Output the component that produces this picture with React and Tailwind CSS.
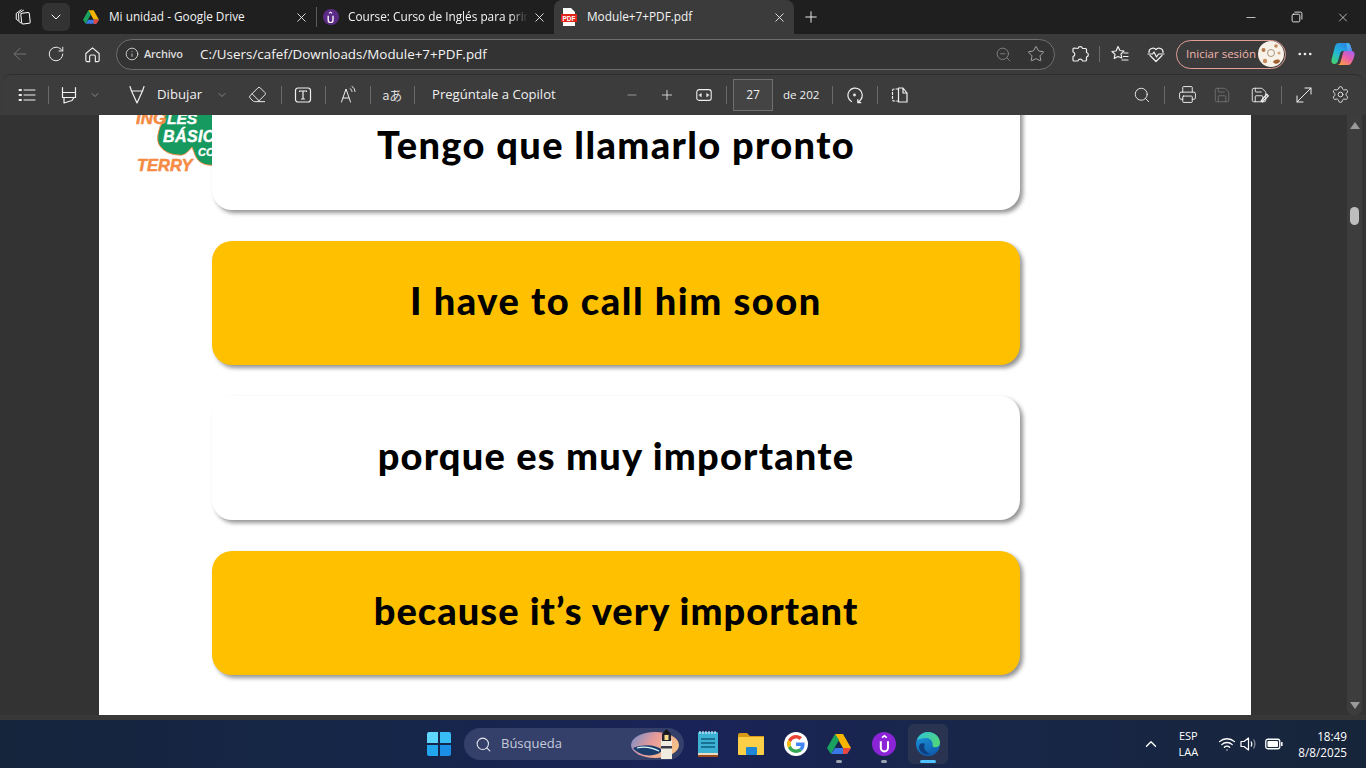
import React from "react";
import {
  ChevronDown, X, Plus, Minus, ArrowLeft, RotateCw, Info, ZoomOut, Star, Ellipsis,
  Eraser, Search, Printer, Save, Settings, ChevronUp, Wifi,
} from "lucide-react";

const S = ({ d, size = 20, sw = 1.2, children, className = "" }) => (
  <svg width={size} height={size} viewBox="0 0 20 20" fill="none" stroke="currentColor" strokeWidth={sw} strokeLinecap="round" strokeLinejoin="round" className={className}>
    {d ? <path d={d} /> : children}
  </svg>
);

const Cell = ({ w, ml = 0, children, className = "" }) => (
  <div style={{ width: w, marginLeft: ml }} className={"flex shrink-0 items-center justify-center " + className}>{children}</div>
);
const Sep = ({ ml, h = "h-[18px]" }) => <div style={{ marginLeft: ml }} className={"w-px shrink-0 bg-[#6a6a6a] " + h} />;

function DriveIcon({ size = 16 }) {
  return (
    <svg width={size} height={size} viewBox="0 0 24 22">
      <path d="M8 1h8l8 14h-8z" fill="#f7b500" />
      <path d="M8 1 0 15l4 6 8-14z" fill="#1aa35f" />
      <path d="M4 21h16l4-6H8z" fill="#3b78e7" />
      <path d="M16 15 24 15l-4 6h-4z" fill="#e8453c" />
    </svg>
  );
}
function UIcon({ size = 16, bg = "#5b2a86" }) {
  return (
    <div style={{ width: size, height: size, background: bg }} className="flex items-center justify-center rounded-full">
      <svg width={size * 0.7} height={size * 0.8} viewBox="0 0 12 16" fill="none" stroke="#fff" strokeWidth="1.7">
        <path d="M3 6v5.500a3 3 0 0 0 6 0V6" />
        <path d="M4 3 6 1.500 8 3" strokeWidth="1.300" />
      </svg>
    </div>
  );
}
function PdfIcon() {
  return (
    <svg width="16" height="18" viewBox="0 0 16 18">
      <path d="M2 0h8l4 4v14H2z" fill="#fff" />
      <rect x="0" y="6" width="16" height="8" fill="#e2231a" />
      <text x="8" y="12.600" textAnchor="middle" fontSize="6.400" fontWeight="700" fill="#fff" fontFamily="Liberation Sans, sans-serif">PDF</text>
    </svg>
  );
}

function Tab({ icon, label, w, active, textW, gap, sep, fade }) {
  return (
    <div style={{ width: w }} className={"relative flex h-[34px] shrink-0 items-center pl-[7px] " + (active ? "rounded-t-lg bg-[#3b3b3b]" : "")}>
      <div className="flex w-[16px] justify-center">{icon}</div>
      <div
        className={"overflow-hidden whitespace-nowrap text-[11.8px] text-[#f4f4f4] " + (fade ? "[mask-image:linear-gradient(90deg,#000_90%,transparent)]" : "")}
        style={{ width: textW, marginLeft: gap }}
      >
        {label}
      </div>
      <X size={15} strokeWidth={1.4} className="absolute right-[7px] text-[#f4f4f4]" />
      {sep && <div className="absolute right-[-1px] h-[20px] w-px bg-[#5c5c5c]" />}
    </div>
  );
}

function TabBar() {
  return (
    <div className="flex h-[34px] shrink-0 items-center bg-[#1f1f1f] text-white">
      <Cell w={14} />
      <Cell w={18}>
        <S size={18} sw={1.1}>
          <rect x="8" y="5.500" width="9.500" height="12" rx="1.500" transform="rotate(-6 12 11)" />
          <path d="M7.500 16.500 5.500 15 5 6l5.500-3.500M4.500 14 2.500 12.500V6L8 2" />
        </S>
      </Cell>
      <div className="ml-[10px] flex h-[28px] w-[28px] items-center justify-center rounded-md bg-[#333333]">
        <ChevronDown size={16} strokeWidth={1.5} />
      </div>
      <div className="ml-[6px] flex items-center">
        <Tab w={240} textW={175} gap={10} icon={<DriveIcon />} label="Mi unidad - Google Drive" sep />
        <Tab w={238} textW={180} gap={9} fade icon={<UIcon />} label="Course: Curso de Inglés para principiantes" />
        <Tab w={240} textW={170} gap={10} active icon={<PdfIcon />} label="Module+7+PDF.pdf" />
      </div>
      <Cell w={18} ml={8}><Plus size={20} strokeWidth={1.2} /></Cell>
      <div className="flex-1" />
      <Cell w={14} className="mr-[32px]"><Minus size={15} strokeWidth={1.2} /></Cell>
      <Cell w={14} className="mr-[32px]">
        <S size={14}><rect x="3" y="6" width="11" height="11" rx="2" /><path d="M7 3h8a2 2 0 0 1 2 2v8" /></S>
      </Cell>
      <Cell w={14} className="mr-[16px]"><X size={17} strokeWidth={1.1} /></Cell>
    </div>
  );
}

function Avatar() {
  return (
    <svg width="26" height="26" viewBox="0 0 26 26">
      <circle cx="13" cy="13" r="13" fill="#f7f1e8" />
      <circle cx="5.500" cy="9" r="2" fill="#b47a4c" />
      <path d="M15 21c2-3 6-3 7-1-1 3-5 4-7 1z" fill="#a0602f" />
      <circle cx="7" cy="20" r="2.200" fill="#c98b5d" />
      <circle cx="18" cy="5" r="1.800" fill="#c08a5c" />
      <circle cx="21" cy="12" r="1.500" fill="#d2a47c" />
      <circle cx="13" cy="12" r="3.500" fill="none" stroke="#a08a74" strokeWidth="0.900" />
    </svg>
  );
}
function CopilotIcon() {
  return (
    <svg width="24" height="24" viewBox="0 0 24 24">
      <defs>
        <linearGradient id="cpa" x1="0.800" y1="0" x2="0.100" y2="1"><stop offset="0" stopColor="#2b7fe8" /><stop offset="0.550" stopColor="#22b6d8" /><stop offset="1" stopColor="#45d46a" /></linearGradient>
        <linearGradient id="cpb" x1="0.900" y1="0" x2="0.200" y2="1"><stop offset="0" stopColor="#a65ff0" /><stop offset="0.500" stopColor="#ec5fa8" /><stop offset="1" stopColor="#f9a23c" /></linearGradient>
        <linearGradient id="cpc" x1="0" y1="0" x2="1" y2="1"><stop offset="0" stopColor="#3fc8e8" /><stop offset="1" stopColor="#5f7cf0" /></linearGradient>
      </defs>
      <path d="M8 1h8c2 0 3 1 3.600 3L21 9H12c-1.500 0-2.300.8-2.700 2L7 19c-.5 2-2 3-3.500 3C1 22 0 20 .5 17.500L4 4.500C4.600 2 6 1 8 1z" fill="url(#cpa)" />
      <path d="M14 9h6c2.500 0 4 1.500 3.500 4-.7 3.500-2 6.500-3.500 8.500-1 1-2 1.500-4 1.500H6c2 0 3-1 3.500-3L12 11c.3-1.300 1-2 2-2z" fill="url(#cpb)" />
      <path d="M15.500 1h.5c2 0 3 1 3.600 3L21.500 10c-.7-.7-1.500-1-2.500-1h-2.500z" fill="url(#cpc)" />
    </svg>
  );
}

function AddressBar() {
  return (
    <div className="flex h-[40px] shrink-0 items-center bg-[#3b3b3b] text-[#f0f0f0]">
      <Cell w={24} ml={8} className="text-[#777777]"><ArrowLeft size={20} strokeWidth={1.1} /></Cell>
      <Cell w={24} ml={12}><RotateCw size={18} strokeWidth={1.3} /></Cell>
      <Cell w={24} ml={12}>
        <S size={19}><path d="M3 9 10 3l7 6v7a1.500 1.500 0 0 1-1.500 1.500H13V12a1.500 1.500 0 0 0-1.500-1.500h-3A1.500 1.500 0 0 0 7 12v5.500H4.500A1.500 1.500 0 0 1 3 16z" /></S>
      </Cell>
      <div className="ml-[12px] flex h-[31px] w-[939px] shrink-0 items-center rounded-full border border-[#6e6e6e] bg-[#333333]">
        <Cell w={16} ml={7}><Info size={14} strokeWidth={1.3} /></Cell>
        <span className="ml-[4px] w-[41px] whitespace-nowrap text-[11px] font-semibold tracking-[-0.2px] text-[#dddddd]">Archivo</span>
        <span className="ml-[15px] whitespace-nowrap text-[13.4px] text-[#f3f3f3]">C:/Users/cafef/Downloads/Module+7+PDF.pdf</span>
        <div className="flex-1" />
        <Cell w={18} ml={0} className="-translate-x-px text-[#8a8a8a]"><ZoomOut size={17} strokeWidth={1.2} /></Cell>
        <Cell w={18} ml={14} className="mr-[9px] text-[#bdbdbd]"><Star size={18} strokeWidth={1.1} /></Cell>
      </div>
      <Cell w={20} ml={15}>
        <S size={20}>
          <path d="M8 4.500a2.300 2.300 0 0 1 4.500 0h3a1 1 0 0 1 1 1v3a2.300 2.300 0 0 1 0 4.500v3a1 1 0 0 1-1 1h-3a2.300 2.300 0 0 0-4.500 0h-4a1 1 0 0 1-1-1v-3.500a2.300 2.300 0 0 0 0-4.500v-3a1 1 0 0 1 1-1z" />
        </S>
      </Cell>
      <Sep ml={9} h="h-[16px]" />
      <Cell w={20} ml={10}>
        <S size={20}><path d="m8 2.500 1.900 4 4.100.5-3 2.900.8 4.100L8 12.500 4.200 14.500 5 10.400 2 7.500l4.100-.5zM14 9h4M13.500 12.500H18M12 16h6" /></S>
      </Cell>
      <Cell w={20} ml={16}>
        <S size={20}><path d="M10 17.500 4 11.500M16 11.500 10 17.500M3 8.500A4 4 0 0 1 10 5.500 4 4 0 0 1 17 8.500M2 10h4.500L8 8l2.500 5 2-3H18" /></S>
      </Cell>
      <div className="ml-[10px] flex h-[29px] w-[110px] shrink-0 items-center justify-between rounded-full border border-[#e0a096] pl-[9px] pr-[1px]">
        <span className="whitespace-nowrap text-[11.5px] text-[#f2b5ac]">Iniciar sesión</span>
        <Avatar />
      </div>
      <Cell w={18} ml={10}><Ellipsis size={18} strokeWidth={1.6} /></Cell>
      <Cell w={24} ml={17}><CopilotIcon /></Cell>
    </div>
  );
}

function PdfToolbar() {
  return (
    <div className="flex h-[41px] shrink-0 bg-[#3b3b3b]">
      <div className="mx-[3px] flex h-[40px] flex-1 items-center rounded-t-lg border-t border-[#2e2e2e] bg-[#3c3c3c] text-[#f0f0f0]">
        <Cell w={22} ml={13}>
          <S size={20} sw={1}><path d="M7 5h11M7 10h11M7 15h11" /><path d="M2.500 5h1.500M2.500 10h1.500M2.500 15h1.500" strokeWidth="2" /></S>
        </Cell>
        <Sep ml={10} />
        <Cell w={24} ml={8}>
          <S size={20}><path d="M3.500 2.500v5h13v-5M3.500 7.500v5h13v-5M5 12.500v5.500l8-2.500 2-3" /></S>
        </Cell>
        <Cell w={28}><ChevronDown size={12} strokeWidth={1.2} className="text-[#b5b5b5]" /></Cell>
        <Cell w={24} ml={16}>
          <S size={20}><path d="m3 1.500 1.500 4.500h11L17 1.500M4.500 6 10 18l5.500-12" /></S>
        </Cell>
        <div className="ml-[8px] w-[45px] whitespace-nowrap text-[13.2px]">Dibujar</div>
        <Cell w={16} ml={12}><ChevronDown size={12} strokeWidth={1.2} className="text-[#b5b5b5]" /></Cell>
        <Cell w={24} ml={15}><Eraser size={19} strokeWidth={1.2} /></Cell>
        <Sep ml={12} />
        <Cell w={24} ml={9}>
          <S size={20}><rect x="2.500" y="3" width="15" height="14" rx="2.500" /><path d="M6.500 6.500v-.5h7v.5M10 6v8M8.500 14h3" /></S>
        </Cell>
        <Sep ml={10} />
        <Cell w={24} ml={10}>
          <S size={20} sw={1}><path d="m3.500 17 4.500-13 4.500 13M5 13h6M12 3.500c1.200.7 1.800 1.700 2 3M14 1.500c1.800 1 2.800 2.700 3 5" /></S>
        </Cell>
        <Sep ml={10} />
        <Cell w={24} ml={9}>
          <span className="whitespace-nowrap text-[13px] tracking-[-0.5px] text-[#dcdcdc]" style={{ fontFamily: '"Noto Sans CJK JP", sans-serif' }}>aあ</span>
        </Cell>
        <Sep ml={10} />
        <div className="ml-[17px] w-[127px] whitespace-nowrap text-[13.1px]">Pregúntale a Copilot</div>
        <Cell w={24} ml={61} className="text-[#a8a8a8]"><Minus size={14} strokeWidth={1.4} /></Cell>
        <Cell w={24} ml={11}><Plus size={16} strokeWidth={1.2} /></Cell>
        <Cell w={24} ml={13}>
          <S size={18}>
            <rect x="2" y="4" width="16" height="12" rx="2.500" />
            <path d="m4.500 10 2.500-1.800v3.600zM15.500 10 13 8.200v3.600z" fill="currentColor" strokeWidth="0.600" />
          </S>
        </Cell>
        <Sep ml={10} />
        <div className="ml-[6px] flex h-[32px] w-[40px] shrink-0 items-center justify-center border border-[#6f6f6f] bg-[#444444] text-[12px]">27</div>
        <div className="ml-[10px] w-[37px] whitespace-nowrap text-[11.6px]">de 202</div>
        <Sep ml={12} />
        <Cell w={24} ml={10}>
          <S size={20}><path d="M6.500 16.500A7.200 7.200 0 1 1 15.500 15l-2.500 2.500M12.800 14.500v3.200h3" /><circle cx="9.500" cy="10" r="0.800" /></S>
        </Cell>
        <Sep ml={10} />
        <Cell w={24} ml={10}>
          <S size={20}><path d="M8 4H4a1.500 1.500 0 0 0-1.500 1.500v9A1.500 1.500 0 0 0 4 16h4" strokeDasharray="2 2" /><path d="M8.500 3v14h8.500V8l-4-5zM13 3v5h4" /></S>
        </Cell>
        <div className="flex-1" />
        <Cell w={24}><Search size={18} strokeWidth={1.2} /></Cell>
        <Sep ml={10} />
        <Cell w={24} ml={10}><Printer size={19} strokeWidth={1.2} /></Cell>
        <Cell w={24} ml={11} className="text-[#767676]"><Save size={18} strokeWidth={1.1} /></Cell>
        <Cell w={24} ml={13} className="relative">
          <Save size={18} strokeWidth={1.2} />
          <S size={11} sw={2.4} className="absolute bottom-[1px] right-[1px]"><path d="M4 16 14 4l3 3-11 11z" /></S>
        </Cell>
        <Sep ml={10} />
        <Cell w={24} ml={10}>
          <S size={20} sw={1}><path d="M3 17 17 3M11 3h6v6M3 11v6h6" /></S>
        </Cell>
        <Cell w={24} ml={12} className="mr-[11px]"><Settings size={19} strokeWidth={1.1} /></Cell>
      </div>
    </div>
  );
}

function Logo() {
  const f = { fontFamily: '"Liberation Sans", sans-serif', fontWeight: 700, fontStyle: "italic" };
  return (
    <svg width="76" height="58" viewBox="0 0 76 58" className="absolute left-[37px] top-0">
      <path d="M30 -2 L78 -2 L78 50 C70 51 63 48 60 42 C58 38 57 34 56 32 C52 37 48 41 43 40 C36 40 28 37 24 31 C20 26 22 18 24 12 C26 8 28 4 30 -2Z" fill="#169a60" stroke="#f58a42" strokeWidth="1" />
      <text x="0" y="9" fontSize="17" fill="#f58a42" stroke="#f58a42" strokeWidth="0.500" style={f}>ING</text>
      <text x="31" y="9" fontSize="15.500" fill="#fff" stroke="#fff" strokeWidth="0.400" style={f}>LES</text>
      <text x="27" y="27" fontSize="16" fill="#fff" stroke="#fff" strokeWidth="0.400" style={f} letterSpacing="0.400">BÁSICO</text>
      <text x="62" y="41" fontSize="11" fill="#fff" stroke="#fff" strokeWidth="0.300" style={f}>CO</text>
      <text x="1" y="56" fontSize="16.500" fill="#f58a42" stroke="#f58a42" strokeWidth="0.500" style={f}>TERRY</text>
    </svg>
  );
}

function Card({ text, yellow, first, tracking }) {
  return (
    <div
      className={
        "flex h-[124px] w-[808px] shrink-0 items-center justify-center rounded-[20px] shadow-[3px_3px_4px_rgba(0,0,0,0.42)] " +
        (yellow ? "bg-[#ffc000]" : "bg-white")
      }
    >
      <span
        className={"whitespace-nowrap text-[38px] font-black text-black " + tracking}
        style={{ fontFamily: 'Lato, "Liberation Sans", sans-serif', position: "relative", top: first ? -4 : -3 }}
      >
        {text}
      </span>
    </div>
  );
}

function Content() {
  return (
    <div className="relative flex h-[600px] shrink-0 overflow-hidden bg-[#333333]">
      <div className="relative ml-[99px] h-[600px] w-[1152px] shrink-0 overflow-hidden bg-white pl-[113px]">
        <Logo />
        <div className="relative -mt-[29px] flex flex-col gap-[31px]">
          <Card first tracking="tracking-[1.37px]" text="Tengo que llamarlo pronto" />
          <Card yellow tracking="tracking-[1.55px]" text="I have to call him soon" />
          <Card tracking="tracking-[1.2px]" text="porque es muy importante" />
          <Card yellow tracking="tracking-[1.05px]" text="because it’s very important" />
        </div>
      </div>
      <div className="ml-[96px] flex w-[15px] shrink-0 flex-col items-center rounded-b-md bg-[#3d3d3d] pt-[7px]">
        <div className="h-0 w-0 border-x-[5px] border-b-[7px] border-x-transparent border-b-[#9a9a9a]" />
        <div className="mt-[78px] h-[18px] w-[9px] rounded-full bg-[#bdbdbd]" />
        <div className="flex-1" />
        <div className="mb-[6px] h-0 w-0 border-x-[5px] border-t-[7px] border-x-transparent border-t-[#9a9a9a]" />
      </div>
    </div>
  );
}

function WinLogo() {
  return (
    <div className="grid h-[24px] w-[24px] grid-cols-2 gap-[1.500px]">
      <div className="rounded-tl-[2px] bg-[#5fd6fb]" />
      <div className="rounded-tr-[2px] bg-[#39bdf5]" />
      <div className="rounded-bl-[2px] bg-[#22a7ee]" />
      <div className="rounded-br-[2px] bg-[#1b8fe6]" />
    </div>
  );
}
function Lighthouse() {
  return (
    <svg width="50" height="32" viewBox="0 0 50 32">
      <defs>
        <linearGradient id="lhs" x1="0" y1="0" x2="1" y2="0.400"><stop offset="0" stopColor="#6b8fd0" /><stop offset="0.500" stopColor="#e79a9a" /><stop offset="1" stopColor="#f6c08a" /></linearGradient>
      </defs>
      <ellipse cx="24" cy="17" rx="24" ry="13" fill="url(#lhs)" />
      <path d="M2 20c10-4 22-4 30 2-6 7-22 8-30-2z" fill="#1b3d6c" />
      <path d="M6 20c8-2 14-1 22 3" stroke="#dff" strokeWidth="1.200" fill="none" />
      <rect x="30" y="12" width="11" height="19" fill="#f1ece0" />
      <rect x="30" y="18" width="11" height="2.500" fill="#3a3a4a" />
      <rect x="31" y="6" width="9" height="7" fill="#22252f" />
      <rect x="33.500" y="7" width="4" height="5" fill="#f6d98a" />
      <path d="m31 6 4.500-5L40 6z" fill="#15171f" />
    </svg>
  );
}
function Notepad() {
  return (
    <svg width="20" height="26" viewBox="0 0 20 26">
      <rect x="0" y="1" width="20" height="25" rx="1" fill="#3db1d4" />
      <rect x="0" y="22" width="20" height="2" fill="#e9dcc0" />
      <rect x="0" y="24" width="20" height="2" fill="#9a4a1c" />
      <path d="M3 8h14M3 12h14M3 16h14" stroke="#0d5f7e" strokeWidth="1.300" />
      <path d="M2 0v3M5 0v3M8 0v3M11 0v3M14 0v3M17 0v3" stroke="#cfe9f3" strokeWidth="1.200" />
    </svg>
  );
}
function Folder() {
  return (
    <svg width="26" height="22" viewBox="0 0 26 22">
      <path d="M0 2a2 2 0 0 1 2-2h7l3 3h14v4H0z" fill="#d99a14" />
      <rect x="0" y="4" width="26" height="18" rx="1" fill="#fbcf48" />
      <rect x="8" y="14" width="11" height="8" rx="1" fill="#1d87d6" />
    </svg>
  );
}
function GoogleIcon() {
  return (
    <div className="flex h-[24px] w-[24px] items-center justify-center rounded-full bg-white">
      <svg width="18" height="18" viewBox="0 0 48 48">
        <path fill="#ea4335" d="M24 9.500c3.500 0 6.700 1.300 9.100 3.500l6.800-6.800C35.800 2.400 30.200 0 24 0 14.600 0 6.500 5.400 2.600 13.200l7.900 6.200C12.400 13.700 17.700 9.500 24 9.500z" />
        <path fill="#4285f4" d="M46.900 24.500c0-1.600-.1-3.100-.4-4.500H24v9h12.900c-.6 3-2.300 5.500-4.800 7.200l7.700 6c4.500-4.200 7.100-10.300 7.100-17.700z" />
        <path fill="#fbbc05" d="M10.500 28.600a14.500 14.500 0 0 1 0-9.200l-7.900-6.200a24 24 0 0 0 0 21.600z" />
        <path fill="#34a853" d="M24 48c6.500 0 11.900-2.100 15.900-5.800l-7.700-6c-2.200 1.500-4.900 2.300-8.200 2.300-6.300 0-11.600-4.200-13.500-9.900l-7.900 6.200C6.500 42.600 14.600 48 24 48z" />
      </svg>
    </div>
  );
}
function EdgeIcon() {
  return (
    <svg width="24" height="24" viewBox="0 0 24 24">
      <defs>
        <linearGradient id="edg" x1="0" y1="0" x2="1" y2="0.600"><stop offset="0" stopColor="#2fc4d8" /><stop offset="1" stopColor="#4fd67c" /></linearGradient>
        <linearGradient id="edb" x1="0" y1="0" x2="0.400" y2="1"><stop offset="0" stopColor="#1e9ee0" /><stop offset="1" stopColor="#0f5fb0" /></linearGradient>
      </defs>
      <circle cx="12" cy="12" r="12" fill="url(#edb)" />
      <path d="M1 8C3 3 7 0 12 0c7 0 12 5 12 11 0 3-3 5-6 4-2-.5-1-2-1.500-4C16 8 13 6 10 6 6 6 3 7 1 8z" fill="url(#edg)" />
      <path d="M9 12c-2 3 0 8 5 10-5 2-11-2-11-7 0-3 3-5 6-3z" fill="#0d3f7e" />
    </svg>
  );
}
const Dot = () => <div className="absolute bottom-[-7px] h-[3px] w-[6px] rounded-full bg-[#9aa3b0]" />;

function Taskbar() {
  const ico = "relative flex w-[28px] shrink-0 items-center justify-center";
  return (
    <div className="flex h-[48px] shrink-0 items-center bg-[linear-gradient(90deg,#15253c_0%,#16264a_30%,#1a2358_50%,#18264a_70%,#17253a_100%)]">
      <div className="ml-[427px]"><WinLogo /></div>
      <div className="ml-[13px] flex h-[32px] w-[220px] shrink-0 items-center rounded-full bg-[#35406a] pl-[11px] pr-[3px]">
        <Search size={17} strokeWidth={1.5} className="text-[#e3e6ee]" />
        <span className="ml-[9px] text-[13px] text-[#c6cbdc]">Búsqueda</span>
        <div className="flex-1" />
        <Lighthouse />
      </div>
      <div className={ico + " ml-[10px]"}><Notepad /></div>
      <div className={ico + " ml-[15px]"}><Folder /></div>
      <div className={ico + " ml-[17px]"}><GoogleIcon /></div>
      <div className={ico + " ml-[15px]"}><DriveIcon size={24} /><Dot /></div>
      <div className={ico + " ml-[17px]"}><UIcon size={24} bg="#8a24d6" /><Dot /></div>
      <div className="relative ml-[10px] flex h-[40px] w-[40px] shrink-0 items-center justify-center rounded-md bg-[#2a3350]">
        <EdgeIcon />
        <div className="absolute bottom-[1px] h-[3px] w-[16px] rounded-full bg-[#4cc2ff]" />
      </div>
      <div className="flex-1" />
      <div className="flex items-center text-white">
        <ChevronUp size={18} strokeWidth={1.8} />
        <div className="ml-[8px] w-[40px] text-center text-[11px] leading-[16px]">ESP<br />LAA</div>
        <Wifi size={18} strokeWidth={1.7} className="ml-[10px]" />
        <svg width="20" height="18" viewBox="0 0 20 18" fill="none" stroke="currentColor" strokeWidth="1.200" strokeLinejoin="round" className="ml-[3px]">
          <path d="M2 6.500h3L9.500 3v12L5 11.500H2z" />
          <path d="M12 6.500c1 1.500 1 3.500 0 5" />
          <path d="M14.500 4.500c1.800 2.800 1.800 6.200 0 9" stroke="#8a93a3" />
        </svg>
        <svg width="18" height="12" viewBox="0 0 18 12" className="ml-[6px]">
          <rect x="0.750" y="1.250" width="14" height="9.500" rx="2" fill="none" stroke="#fff" strokeWidth="1.300" />
          <rect x="2.500" y="3" width="10.500" height="6" rx="0.800" fill="#fff" />
          <rect x="16" y="4" width="1.600" height="4" rx="0.600" fill="#fff" />
        </svg>
        <div className="ml-[15px] mr-[19px] text-right text-[11.7px] leading-[16px] whitespace-nowrap">18:49<br />8/8/2025</div>
      </div>
    </div>
  );
}

export default function App() {
  return (
    <div className="flex h-[768px] w-[1366px] flex-col overflow-hidden bg-[#333333]" style={{ fontFamily: '"Open Sans", "Noto Sans", sans-serif' }}>
      <TabBar />
      <AddressBar />
      <PdfToolbar />
      <Content />
      <div className="h-[5px] shrink-0 bg-[#383838]" />
      <Taskbar />
    </div>
  );
}
